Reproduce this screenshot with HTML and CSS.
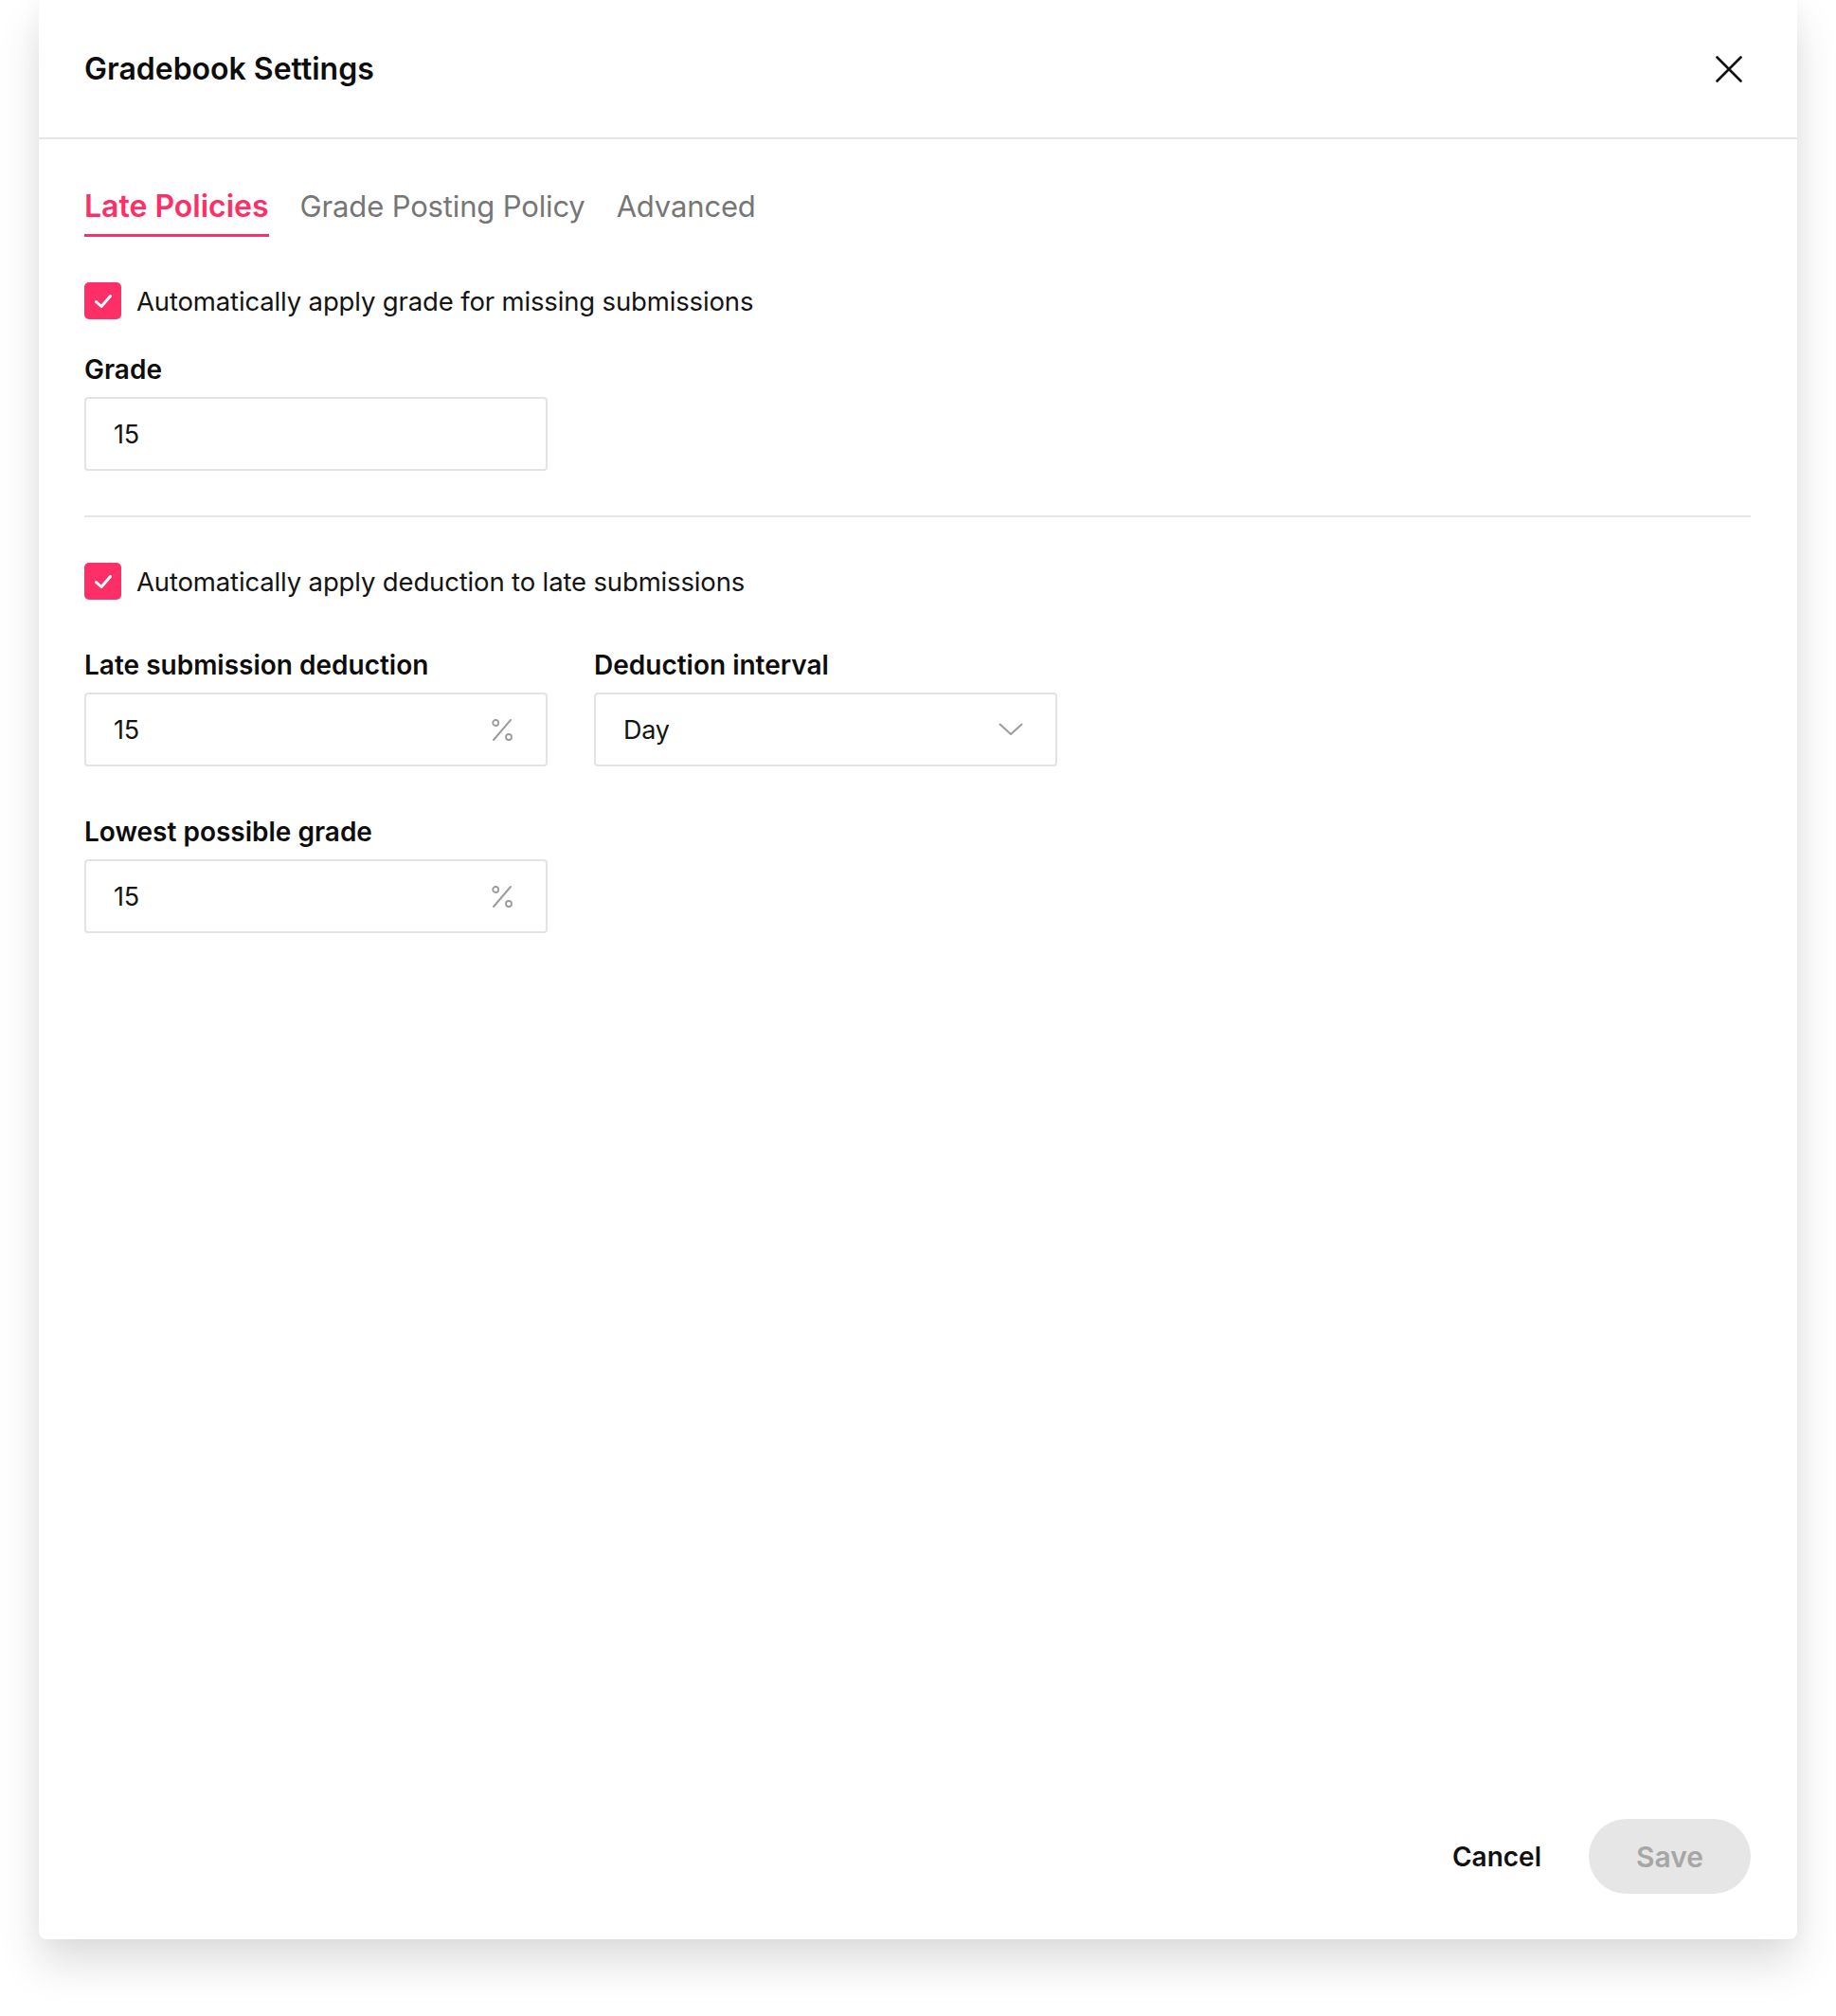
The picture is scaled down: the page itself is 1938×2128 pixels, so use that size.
FILE: index.html
```html
<!DOCTYPE html>
<html lang="en">
<head>
<meta charset="utf-8">
<title>Gradebook Settings</title>
<link rel="stylesheet" href="styles.css">
</head>
<body>
<div class="modal">
  <header class="modal-header">
    <h1 class="modal-title">Gradebook Settings</h1>
    <button class="close-btn" aria-label="Close">
      <svg width="28" height="28" viewBox="0 0 28 28"><path d="M1.5 1.5 L26.5 26.5 M26.5 1.5 L1.5 26.5" stroke="#111" stroke-width="2.6" stroke-linecap="round" fill="none"/></svg>
    </button>
  </header>

  <main class="modal-body">
    <nav class="tabs">
      <span class="tab tab-active">Late Policies</span>
      <span class="tab">Grade Posting Policy</span>
      <span class="tab">Advanced</span>
    </nav>

    <label class="check-row first">
      <span class="checkbox">
        <svg width="24" height="24" viewBox="0 0 24 24"><path d="M4.5 12.5 L10 17.5 L19.5 6.5" stroke="#fff" stroke-width="3" stroke-linecap="round" stroke-linejoin="round" fill="none"/></svg>
      </span>
      <span class="check-text">Automatically apply grade for missing submissions</span>
    </label>

    <div class="field field-first">
      <div class="field-label">Grade</div>
      <div class="input"><span class="value">15</span></div>
    </div>

    <hr class="divider">

    <label class="check-row">
      <span class="checkbox">
        <svg width="24" height="24" viewBox="0 0 24 24"><path d="M4.5 12.5 L10 17.5 L19.5 6.5" stroke="#fff" stroke-width="3" stroke-linecap="round" stroke-linejoin="round" fill="none"/></svg>
      </span>
      <span class="check-text">Automatically apply deduction to late submissions</span>
    </label>

    <div class="field-row">
      <div class="field">
        <div class="field-label">Late submission deduction</div>
        <div class="input">
          <span class="value">15</span>
          <svg class="pct" width="24" height="25" viewBox="0 0 24 25"><path d="M21 2 L3 23" stroke="#9c9c9c" stroke-width="2" stroke-linecap="round"/><circle cx="5.2" cy="5" r="3" stroke="#9c9c9c" stroke-width="1.8" fill="none"/><circle cx="19" cy="20" r="3" stroke="#9c9c9c" stroke-width="1.8" fill="none"/></svg>
        </div>
      </div>
      <div class="field">
        <div class="field-label">Deduction interval</div>
        <div class="input">
          <span class="value">Day</span>
          <svg class="chev" width="26" height="14" viewBox="0 0 26 14"><path d="M1.5 1.5 L13 12 L24.5 1.5" stroke="#9c9c9c" stroke-width="2" stroke-linecap="round" stroke-linejoin="round" fill="none"/></svg>
        </div>
      </div>
    </div>

    <div class="field field-last">
      <div class="field-label">Lowest possible grade</div>
      <div class="input">
        <span class="value">15</span>
        <svg class="pct" width="24" height="25" viewBox="0 0 24 25"><path d="M21 2 L3 23" stroke="#9c9c9c" stroke-width="2" stroke-linecap="round"/><circle cx="5.2" cy="5" r="3" stroke="#9c9c9c" stroke-width="1.8" fill="none"/><circle cx="19" cy="20" r="3" stroke="#9c9c9c" stroke-width="1.8" fill="none"/></svg>
      </div>
    </div>
  </main>

  <footer class="modal-footer">
    <button class="btn-cancel">Cancel</button>
    <button class="btn-save" disabled>Save</button>
  </footer>
</div>
</body>
</html>
```

FILE: styles.css
```css
* { box-sizing: border-box; }

html, body {
  margin: 0;
  padding: 0;
  background: #ffffff;
}

body {
  font-family: Inter, "Noto Sans", "Liberation Sans", sans-serif;
  color: #111111;
  width: 1938px;
  height: 2128px;
  overflow: hidden;
}

.modal {
  margin-left: 41px;
  width: 1856px;
  height: 2047px;
  background: #ffffff;
  border-radius: 0 0 8px 8px;
  box-shadow: 0 26px 46px rgba(0, 0, 0, 0.13), 0 0 24px rgba(0, 0, 0, 0.04);
  display: flex;
  flex-direction: column;
}

.modal-header {
  height: 147px;
  border-bottom: 2px solid #e6e6e6;
  display: flex;
  align-items: center;
  justify-content: space-between;
  padding: 0 58px 0 48px;
  flex-shrink: 0;
}

.modal-title {
  margin: 0;
  font-size: 32px;
  font-weight: 600;
  letter-spacing: 0;
  color: #0d0d0d;
}

.close-btn {
  border: 0;
  background: none;
  padding: 0;
  width: 28px;
  height: 28px;
  display: flex;
  cursor: pointer;
}

.modal-body {
  flex: 1;
  padding: 51px 49px 0 48px;
  display: flex;
  flex-direction: column;
}

.tabs {
  display: flex;
  gap: 33px;
}

.tab {
  font-size: 31px;
  line-height: 40px;
  font-weight: 400;
  color: #767676;
  padding-bottom: 9px;
  border-bottom: 3px solid transparent;
  letter-spacing: -0.15px;
}

.tab-active {
  color: #fe2f66;
  font-weight: 600;
  font-size: 32px;
  letter-spacing: 0;
  border-bottom-color: #fe2f66;
}

.check-row {
  display: flex;
  align-items: center;
  gap: 16px;
  margin-top: 48px;
  height: 39px;
}

.checkbox {
  width: 39px;
  height: 39px;
  border-radius: 5px;
  background: #fe2f66;
  display: flex;
  align-items: center;
  justify-content: center;
  flex-shrink: 0;
}

.check-text {
  font-size: 27.5px;
  font-weight: 400;
  color: #141414;
  letter-spacing: -0.15px;
}

.field {
  display: flex;
  flex-direction: column;
  gap: 11px;
  width: 489px;
}

.field-first { margin-top: 35px; }
.field-last { margin-top: 51px; }

.field-row {
  display: flex;
  gap: 49px;
  margin-top: 51px;
}

.field-label {
  font-size: 28px;
  line-height: 36px;
  font-weight: 600;
  color: #0d0d0d;
  letter-spacing: 0;
}

.input {
  height: 78px;
  border: 2px solid #e3e3e3;
  border-radius: 4px;
  display: flex;
  align-items: center;
  justify-content: space-between;
  padding: 0 34px 0 29px;
}

.value {
  font-size: 27px;
  font-weight: 400;
  color: #141414;
  letter-spacing: -0.3px;
}

.divider {
  margin: 47px 0 0 0;
  border: 0;
  border-top: 2px solid #e6e6e6;
  height: 0;
}

.modal-footer {
  display: flex;
  justify-content: flex-end;
  align-items: center;
  gap: 50px;
  padding: 0 49px 48px 0;
  flex-shrink: 0;
}

.btn-cancel {
  border: 0;
  background: none;
  padding: 0;
  font-family: inherit;
  font-size: 28px;
  font-weight: 600;
  color: #111111;
}

.btn-save {
  border: 0;
  width: 171px;
  height: 79px;
  border-radius: 40px;
  background: #e6e6e6;
  color: #a6a6a6;
  font-family: inherit;
  font-size: 30px;
  font-weight: 600;
}
```
